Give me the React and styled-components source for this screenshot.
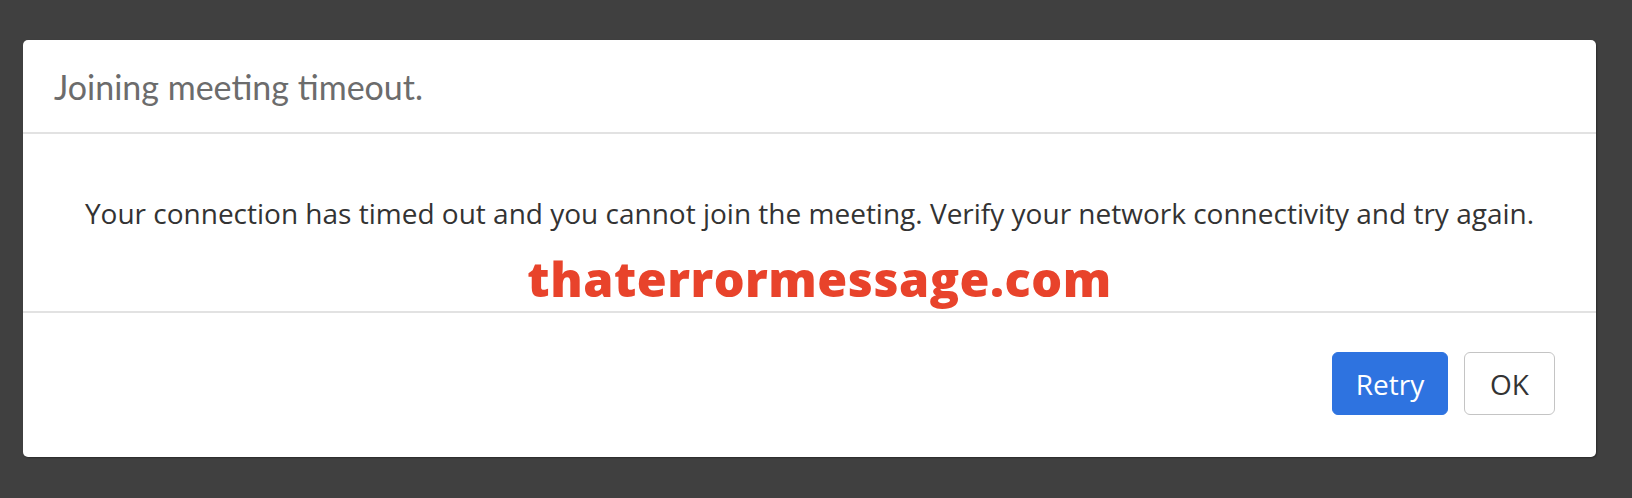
import React from "react";
import styled, { createGlobalStyle } from "styled-components";

const Global = createGlobalStyle`
  html, body { margin: 0; padding: 0; background: #404040; }
  body { font-family: "Open Sans", "Liberation Sans", sans-serif; }
`;

const Page = styled.div`
  width: 1632px;
  height: 498px;
  box-sizing: border-box;
  padding: 40px 36px 41px 23px;
  display: flex;
`;

const Dialog = styled.div`
  flex: 1;
  background: #ffffff;
  border-radius: 5px;
  box-shadow: 1px 1px 2px rgba(0, 0, 0, 0.35);
  display: flex;
  flex-direction: column;
  overflow: hidden;
`;

const Header = styled.div`
  height: 94px;
  box-sizing: border-box;
  border-bottom: 2px solid #e2e2e2;
  display: flex;
  align-items: center;
  padding: 0 0 0 31px;
`;

const Title = styled.h2`
  margin: 0;
  font-family: "Lato", "Liberation Sans", sans-serif;
  font-weight: 400;
  font-size: 34px;
  color: #6c6c6c;
`;

const Body = styled.div`
  height: 179px;
  box-sizing: border-box;
  border-bottom: 2px solid #e2e2e2;
  display: flex;
  flex-direction: column;
  align-items: center;
  padding-top: 60px;
`;

const Message = styled.p`
  margin: 0;
  font-size: 28px;
  line-height: 38px;
  color: #333333;
`;

const Watermark = styled.div`
  margin: 19px 0 0 20px;
  font-family: "Open Sans", "Lato", sans-serif;
  font-weight: 800;
  font-size: 48.5px;
  line-height: 54px;
  color: #e8432b;
  letter-spacing: 0.5px;
`;

const Footer = styled.div`
  flex: 1;
  display: flex;
  justify-content: flex-end;
  align-items: flex-start;
  gap: 16px;
  padding: 39px 41px 0 0;
`;

const Button = styled.button`
  height: 63px;
  min-width: ${(p) => p.$w}px;
  box-sizing: border-box;
  border-radius: 6px;
  font-family: "Open Sans", "Liberation Sans", sans-serif;
  font-size: 28px;
  cursor: pointer;
  border: 1px solid ${(p) => (p.$primary ? "#2e73e0" : "#c4c4c4")};
  background: ${(p) => (p.$primary ? "#2e73e0" : "#ffffff")};
  color: ${(p) => (p.$primary ? "#ffffff" : "#333333")};
  padding: 0;
`;

export default function App() {
  return (
    <>
      <Global />
      <Page>
        <Dialog>
          <Header>
            <Title>Joining meeting timeout.</Title>
          </Header>
          <Body>
            <Message>
              Your connection has timed out and you cannot join the meeting. Verify your network connectivity and try again.
            </Message>
            <Watermark>thaterrormessage.com</Watermark>
          </Body>
          <Footer>
            <Button $primary $w={116}>Retry</Button>
            <Button $w={91}>OK</Button>
          </Footer>
        </Dialog>
      </Page>
    </>
  );
}
